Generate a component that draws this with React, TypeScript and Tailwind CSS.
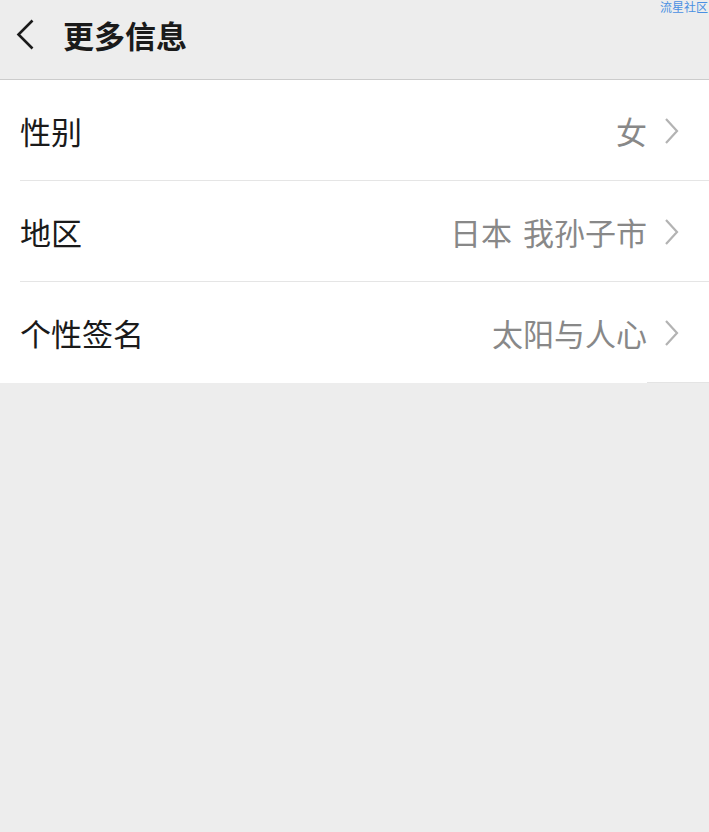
import React from "react";

const Chevron = () => (
  <svg width="16" height="28" viewBox="0 0 16 28" className="shrink-0">
    <path d="M2 2 L13 14 L2 26" fill="none" stroke="#b3b3b3" strokeWidth="2.2" />
  </svg>
);

const Row = ({ label, value, last }: { label: string; value: string[]; last?: boolean }) => (
  <div className="relative flex h-[101px] items-center bg-white pl-[20px] pr-[29px]">
    <div className="flex-1 text-[31px] leading-none text-[#1a1a1a]">{label}</div>
    <div className="mr-[17px] flex gap-[11px] text-[31px] leading-none text-[#888888] whitespace-pre">
      {value.map((v) => (
        <span key={v}>{v}</span>
      ))}
    </div>
    <Chevron />
    {!last && <div className="absolute bottom-0 left-[20px] right-0 h-px bg-[#e5e5e5]" />}
    {last && <div className="absolute bottom-0 left-[647px] right-0 h-px bg-[#e4e4e4]" />}
  </div>
);

export default function App() {
  return (
    <div
      className="relative min-h-[832px] w-[709px] bg-[#ededed]"
      style={{ fontFamily: '"Noto Sans CJK SC", "Noto Sans", sans-serif' }}
    >
      <div className="absolute right-[1px] top-0 text-[12px] leading-[14px] text-[#4a90e2]">流星社区</div>
      <div className="flex h-[80px] items-center border-b border-[#cccccc] bg-[#ededed] pb-[10px]">
        <svg width="40" height="40" viewBox="0 0 40 40" className="ml-[8px] shrink-0">
          <path d="M24.5 5.5 L10.5 19.5 L24.5 33.5" fill="none" stroke="#1a1a1a" strokeWidth="2.6" />
        </svg>
        <div className="ml-[15px] text-[31px] font-bold leading-none text-[#1a1a1a]">更多信息</div>
      </div>
      <div className="flex flex-col">
        <Row label="性别" value={["女"]} />
        <Row label="地区" value={["日本", "我孙子市"]} />
        <Row label="个性签名" value={["太阳与人心"]} last />
      </div>
    </div>
  );
}
